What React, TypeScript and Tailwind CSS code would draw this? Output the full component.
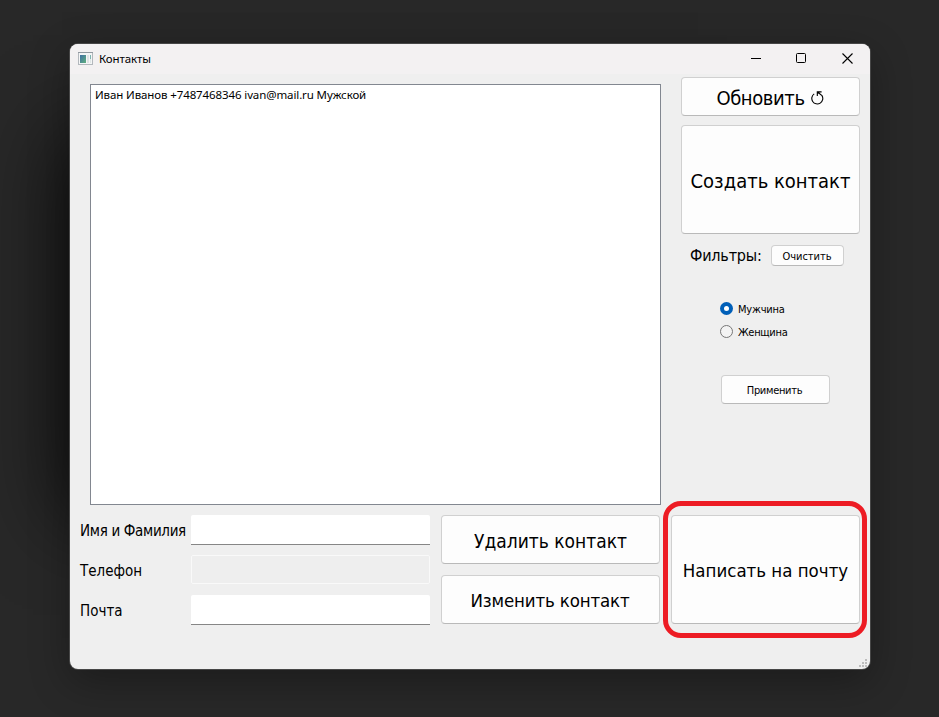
import type { ReactNode } from "react";

const buttonBase =
  "flex shrink-0 items-center justify-center whitespace-nowrap rounded-[4px] border border-[#d0d0d0] border-b-[#b9b9b9] bg-[#fdfdfd] leading-none text-black";

function Button({ className, children }: { className: string; children: ReactNode }) {
  return (
    <button type="button" className={`${buttonBase} ${className}`}>
      {children}
    </button>
  );
}

function Radio({ label, checked, className }: { label: string; checked?: boolean; className?: string }) {
  return (
    <div className="flex h-[13px] items-center gap-[5px]">
      {checked ? (
        <span className="flex size-[13px] items-center justify-center rounded-full bg-[#005fb8]">
          <span className="size-[5px] rounded-full bg-white" />
        </span>
      ) : (
        <span className="size-[13px] rounded-full border border-[#777777] bg-[#f3f3f3]" />
      )}
      <span className={`pt-[2px] text-[11px] leading-[13px] ${className ?? ""}`}>{label}</span>
    </div>
  );
}

function TitleBar() {
  return (
    <header className="flex h-[30px] shrink-0 items-center rounded-t-[8px] bg-[#f3f1f2] pl-2 pr-[17px] font-['Noto_Sans',sans-serif]">
      <svg width="15" height="13" viewBox="0 0 15 13" className="-mt-0.5" shapeRendering="crispEdges">
        <defs>
          <linearGradient id="pane" x1="0" y1="0" x2="1" y2="1">
            <stop offset="0" stopColor="#3f6ea3" />
            <stop offset="1" stopColor="#5fb07e" />
          </linearGradient>
        </defs>
        <rect x="0.5" y="0.5" width="14" height="12" fill="#f4f5f6" stroke="#b3b8bd" />
        <rect x="0" y="0" width="15" height="1" fill="#9299a1" />
        <rect x="2" y="3" width="6" height="8" fill="url(#pane)" />
        <rect x="9" y="3" width="2" height="8" fill="#dfe2e4" />
        <rect x="12" y="3" width="1" height="4" fill="#7fb3b0" />
        <rect x="12" y="7" width="1" height="4" fill="#dfe6e6" />
      </svg>
      <h1 className="ml-[6px] text-[11.5px] leading-[16px] tracking-[-0.1px]">Контакты</h1>
      <div className="-mt-px ml-auto flex items-center gap-[35px]">
        <svg width="10" height="11" viewBox="0 0 10 11" fill="#000">
          <rect x="0" y="5" width="10" height="1" />
        </svg>
        <svg width="11" height="11" viewBox="0 0 11 11" fill="none" stroke="#000">
          <rect x="0.5" y="0.5" width="9" height="9" rx="1" />
        </svg>
        <svg width="11" height="11" viewBox="0 0 11 11" fill="none" stroke="#000" strokeWidth="1.1">
          <path d="M0.5 0.5l10 10M10.5 0.5l-10 10" />
        </svg>
      </div>
    </header>
  );
}

export default function App() {
  return (
    <div className="relative h-[717px] w-[939px] overflow-hidden bg-[#282828] pl-[70px] pt-[44px] font-['DejaVu_Sans_Condensed','DejaVu_Sans',sans-serif] text-black">
      <div className="absolute left-[80px] top-[150px] h-[350px] w-[600px] shadow-[0_0_80px_18px_rgba(0,0,0,0.7)]" />
      <div className="relative flex h-[625px] w-[800px] flex-col rounded-[8px] bg-[#efefef] shadow-[0_0_0_1px_#464646,0_12px_40px_rgba(0,0,0,0.32)]">
        <TitleBar />

        <div className="flex h-[441px] shrink-0 pl-5">
          <ul className="mt-[10px] h-[421px] w-[571px] border border-[#828790] bg-white pl-[4px] pt-[2px] font-['Noto_Sans',sans-serif]">
            <li className="text-[11.5px] leading-[16px] tracking-[-0.11px]">
              Иван Иванов +7487468346 ivan@mail.ru Мужской
            </li>
          </ul>
          <aside className="ml-5 flex w-[179px] flex-col pt-[3px]">
            <Button className="h-[39px] gap-[6px] pr-px pt-[2px] text-[20px] tracking-[-0.4px]">
              Обновить
              <svg width="13" height="14" viewBox="0 0 13 14" fill="none" stroke="#000" strokeWidth="1.1">
                <path d="M3.2 2.9A5.5 5.5 0 1 0 11 4.6L6.8 1.2" />
                <path d="M6.3 5V0.9H10.6" />
                <path d="M6.3 0.9h2.6L6.3 3.5z" fill="#000" stroke="none" />
              </svg>
            </Button>
            <Button className="mt-[9px] h-[109px] pt-[2px] text-[20px]">Создать контакт</Button>
            <div className="mt-[11px] flex items-center pl-[9px]">
              <span className="w-[81px] whitespace-nowrap text-[16px] leading-[21px] tracking-[-0.2px]">Фильтры:</span>
              <Button className="h-[21px] w-[73px] pr-px pt-px text-[11px] tracking-[-0.05px]">Очистить</Button>
            </div>
            <div className="mt-9 flex flex-col gap-[10px] pl-[39px]">
              <Radio label="Мужчина" checked className="tracking-[-0.2px]" />
              <Radio label="Женщина" className="tracking-[-0.3px]" />
            </div>
            <Button className="ml-10 mt-[37px] h-[29px] w-[109px] pr-[2px] pt-[2px] text-[11px] tracking-[-0.3px]">
              Применить
            </Button>
          </aside>
        </div>

        <div className="flex shrink-0 pl-[10px]">
          <div className="flex flex-col gap-[10px] text-[15px]">
            <label className="flex h-[30px] items-center">
              <span className="w-[111px] whitespace-nowrap pt-[2px] tracking-[-0.32px]">Имя и Фамилия</span>
              <input className="h-[30px] w-[239px] rounded-t-[2px] border-b border-[#868686] bg-white outline-none" />
            </label>
            <label className="flex h-[30px] items-center">
              <span className="w-[111px] pt-[2px]">Телефон</span>
              <input
                disabled
                className="-mt-px h-[29px] w-[239px] rounded-[2px] border border-[#f9f9f9] bg-[#eeeeee] outline-none"
              />
            </label>
            <label className="flex h-[30px] items-center">
              <span className="w-[111px] pt-[2px]">Почта</span>
              <input className="h-[30px] w-[239px] rounded-t-[2px] border-b border-[#868686] bg-white outline-none" />
            </label>
          </div>
          <div className="ml-[11px] flex w-[219px] flex-col gap-[11px]">
            <Button className="h-[49px] pt-[3px] text-[19px]">Удалить контакт</Button>
            <Button className="h-[49px] pr-px pt-[3px] text-[18.5px] tracking-[-0.15px]">Изменить контакт</Button>
          </div>
          <Button className="ml-[11px] h-[109px] w-[189px] pt-[3px] text-[18.5px]">
            Написать на почту
          </Button>
        </div>

        <svg
          width="8"
          height="8"
          viewBox="0 0 8 8"
          fill="#bdbdbd"
          shapeRendering="crispEdges"
          className="absolute bottom-[2px] right-[3px]"
        >
          <path d="M6 0h2v2H6zM3 3h2v2H3zM6 3h2v2H6zM0 6h2v2H0zM3 6h2v2H3zM6 6h2v2H6z" />
        </svg>
      </div>
      <div className="pointer-events-none absolute left-[663px] top-[501px] h-[137px] w-[204px] rounded-[18px] border-[5px] border-[#ed1c24]" />
    </div>
  );
}
